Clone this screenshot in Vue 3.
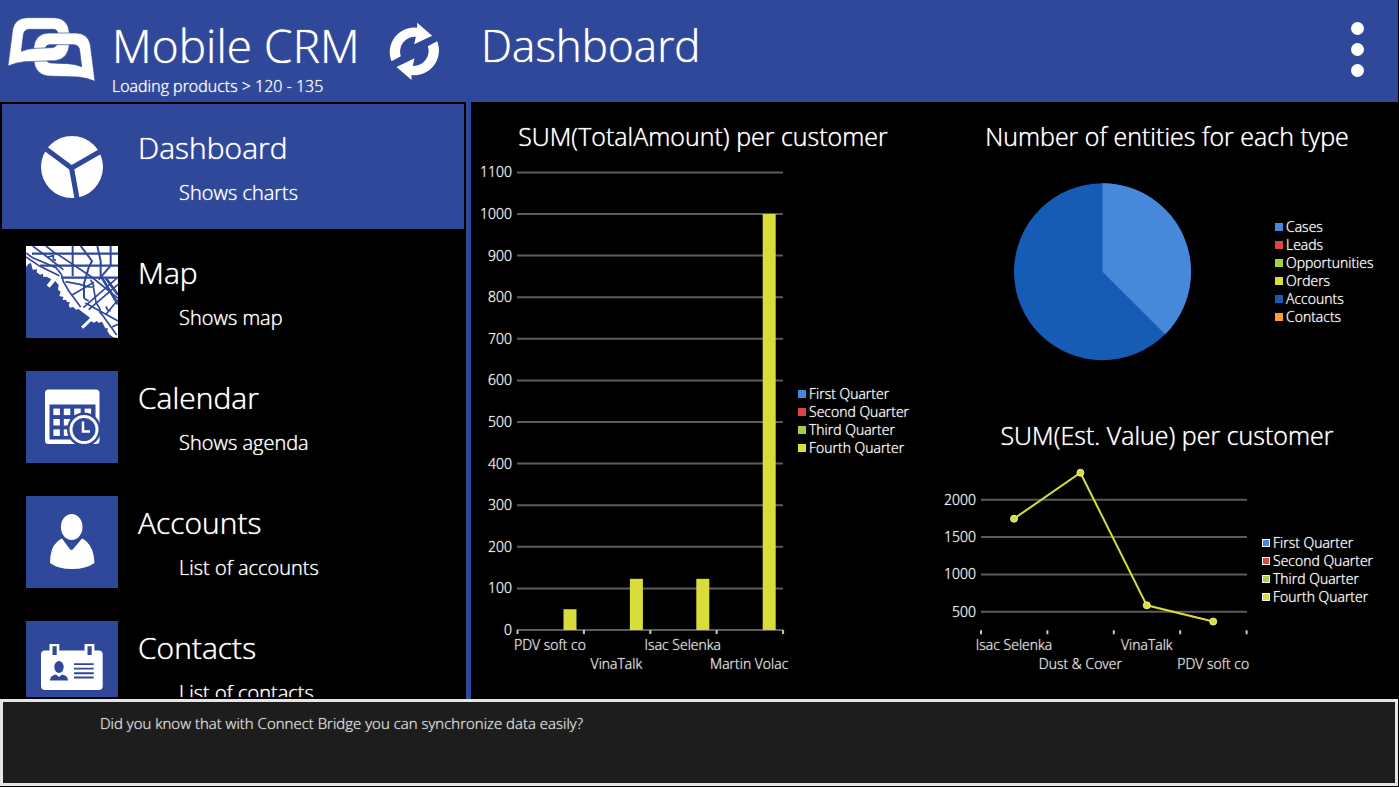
<script setup>
import { ref } from 'vue'

const selected = ref('dashboard')

const items = [
  { id: 'dashboard', title: 'Dashboard', note: 'Shows charts' },
  { id: 'map', title: 'Map', note: 'Shows map' },
  { id: 'calendar', title: 'Calendar', note: 'Shows agenda' },
  { id: 'accounts', title: 'Accounts', note: 'List of accounts' },
  { id: 'contacts', title: 'Contacts', note: 'List of contacts' },
]

const colors = {
  blue: '#4688da',
  red: '#dd4444',
  green: '#a4d048',
  yellow: '#d8dd3c',
  navy: '#175cb4',
  orange: '#ff9b33',
}

const quarters = [
  { label: 'First Quarter', color: colors.blue },
  { label: 'Second Quarter', color: colors.red },
  { label: 'Third Quarter', color: colors.green },
  { label: 'Fourth Quarter', color: colors.yellow },
]

const entities = [
  { label: 'Cases', color: colors.blue },
  { label: 'Leads', color: colors.red },
  { label: 'Opportunities', color: colors.green },
  { label: 'Orders', color: colors.yellow },
  { label: 'Accounts', color: colors.navy },
  { label: 'Contacts', color: colors.orange },
]

/* Bar chart geometry */
const step = 66.4
const barBase = 470
const barY = (v) => barBase - (v * 41.6) / 100
const barTicks = Array.from({ length: 12 }, (_, i) => i * 100)
const bars = [
  { label: 'PDV soft co', value: 50 },
  { label: 'VinaTalk', value: 123 },
  { label: 'Isac Selenka', value: 123 },
  { label: 'Martin Volac', value: 1000 },
]

/* Line chart geometry */
const lineY = (v) => 190 - (v * 74.8) / 1000
const lineTicks = [500, 1000, 1500, 2000]
const points = [
  { label: 'Isac Selenka', value: 1745 },
  { label: 'Dust & Cover', value: 2360 },
  { label: 'VinaTalk', value: 587 },
  { label: 'PDV soft co', value: 370 },
]
const linePath = points.map((p, i) => `${79 + i * step},${lineY(p.value)}`).join(' ')
</script>

<template>
  <div class="app">
    <header class="top">
      <div class="brand">
        <svg class="logo" viewBox="0 0 288 222" aria-hidden="true">
          <defs>
            <path
              id="link-shape"
              fill-rule="evenodd"
              d="M12 162L26 52Q33 18 70 17H150Q192 18 196 62V98Q192 140 155 146L62 149Q34 152 12 162ZM52 118Q70 110 93 109L143 107Q160 106 161 88V64Q160 52 148 52H74Q59 54 58 70Z"
            />
            <clipPath id="front"><rect x="0" y="100" width="142" height="70" /></clipPath>
          </defs>
          <g class="link-fill">
            <use href="#link-shape" />
            <use href="#link-shape" transform="translate(285 46) scale(-1 1)" />
            <use href="#link-shape" clip-path="url(#front)" />
          </g>
        </svg>
        <div class="names">
          <h1>Mobile CRM</h1>
          <p>Loading products &gt; 120 - 135</p>
        </div>
        <button class="refresh" type="button" aria-label="Refresh">
          <svg viewBox="1165 62 158 180" aria-hidden="true">
            <g id="arrow">
              <path d="M1175 183A74 74 0 0 1 1252 82V67L1297 106L1243 132L1248 109A45 45 0 0 0 1203 168Z" />
            </g>
            <use href="#arrow" transform="rotate(180 1243.5 153)" />
          </svg>
        </button>
      </div>
      <h2>Dashboard</h2>
      <button class="more" type="button" aria-label="More options">
        <span></span><span></span><span></span>
      </button>
    </header>

    <div class="body">
      <nav class="side" aria-label="Modules">
        <div class="list">
          <button
            v-for="it in items"
            :key="it.id"
            type="button"
            class="item"
            :class="{ active: it.id === selected }"
            @click="selected = it.id"
          >
            <svg v-if="it.id === 'dashboard'" class="icon" viewBox="0 0 92 92" aria-hidden="true">
              <circle cx="46" cy="46" r="31" fill="#fff" />
              <path d="M20 28L45.500 47L76 29.500M45.500 47L51.500 80" fill="none" stroke="#2f4899" stroke-width="5" />
            </svg>
            <svg v-else-if="it.id === 'map'" class="icon" viewBox="18 15 276 276" aria-hidden="true">
              <path
                fill="#fff"
                d="M18 15H294V291L280 289L270 282L262 270L264 262L256 262L246 242L236 246L231 240L222 245L213 241L190 263L183 257L204 237L210 230L184 211L176 204L168 206L160 198L150 200L146 193L150 182L142 184L138 176L128 177L130 168L118 165L122 152L114 146L116 132L106 120L89 140L80 133L94 115L80 107L70 108L69 98L60 101L50 94L51 85L38 86L33 66L26 68L18 78Z"
              />
              <g fill="none" stroke="#2f4899" stroke-width="5">
                <path d="M18 36L38 50L108 80L124 100M38 15L78 45L130 86M78 15L110 40M110 38L215 108L294 172M18 48L60 76L118 104" />
                <path d="M36 38H294M60 74H294M124 110H294" stroke-width="7" />
                <path d="M158 15V106M232 15L242 60V106M182 15L216 60L206 80L192 128V172M272 15V74M272 74L236 116" stroke-width="6" />
                <path d="M124 100L130 122L148 152L182 198M136 122L180 130L206 138H222M156 162L222 124M222 136L212 116M220 136L228 184L240 204V214L250 226L290 282M196 186L294 240M192 172L206 180" />
                <path d="M242 104L294 190M258 112L294 162" stroke-width="8" />
                <path d="M190 200L290 112M206 206L294 130M258 220L294 176M258 196L262 206L272 210M276 258L294 250" />
                <path d="M84 48L100 44V56L108 58" />
              </g>
            </svg>
            <svg v-else-if="it.id === 'calendar'" class="icon" viewBox="0 0 92 92" aria-hidden="true">
              <rect x="19" y="18.500" width="54.500" height="54.500" rx="3.500" fill="#fff" />
              <rect x="23.500" y="33.500" width="46" height="35" fill="#2f4899" />
              <g fill="#fff">
                <template v-for="r in 3" :key="r">
                  <rect v-for="c in 4" :key="c" :x="17 + c * 10.4" :y="27.200 + r * 10.4" width="6.500" height="6.500" />
                </template>
              </g>
              <circle cx="58" cy="58.500" r="17" fill="#2f4899" />
              <circle cx="58" cy="58.500" r="13" fill="none" stroke="#fff" stroke-width="3" />
              <path d="M57 50.500V60.500H64" fill="none" stroke="#fff" stroke-width="2.500" />
            </svg>
            <svg v-else-if="it.id === 'accounts'" class="icon" viewBox="0 0 92 92" aria-hidden="true">
              <g fill="#fff">
                <ellipse cx="45.700" cy="31" rx="10.800" ry="13" />
                <path d="M24 67Q24 52 31 46Q33 43.500 36 42.500L43 52Q45.500 56 48 52L56 42.500Q59 43.500 61 46Q68 53 68.500 67Q60 73 46 73Q32 73 24 67Z" />
              </g>
            </svg>
            <svg v-else class="icon" viewBox="0 0 92 92" aria-hidden="true">
              <rect x="15" y="29.500" width="61.700" height="39.500" rx="4" fill="#fff" />
              <path d="M23.500 23H33.300V33H23.500ZM58.600 23H68.400V33H58.600Z" fill="#fff" />
              <g fill="#2f4899">
                <path d="M26.500 25.300H30.700V34H26.500ZM61.500 25.300H65.700V34H61.500Z" />
                <ellipse cx="33" cy="46" rx="4.700" ry="6" />
                <path d="M24 59.500Q24 54.500 30 53.500L33 56L36 53.500Q42 54.500 42 59.500Z" />
                <path d="M48 42.300H67.700V44H48ZM48 46.800H67.700V48.500H48ZM48 51.200H67.700V53.200H48ZM48 55.500H67.700V57.500H48Z" />
              </g>
            </svg>
            <span class="text">
              <strong>{{ it.title }}</strong>
              <small>{{ it.note }}</small>
            </span>
          </button>
        </div>
      </nav>

      <main class="charts">
        <section class="panel tall">
          <h3>SUM(TotalAmount) per customer</h3>
          <div class="plot">
            <svg viewBox="0 0 327 539" role="img" aria-label="Total amount per customer">
              <g v-for="t in barTicks" :key="t">
                <line class="grid" x1="46" x2="312" :y1="barY(t)" :y2="barY(t)" />
                <text class="axis" x="41" :y="barY(t) + 5" text-anchor="end">{{ t }}</text>
              </g>
              <line v-for="n in 5" :key="n" class="tick" :x1="46.500 + (n - 1) * step" :x2="46.500 + (n - 1) * step" y1="470" y2="474" />
              <g v-for="(b, i) in bars" :key="b.label">
                <rect :x="92.500 + i * step" :y="barY(b.value)" width="13" :height="barBase - barY(b.value)" :fill="colors.yellow" />
                <text class="cat" :x="79 + i * step" :y="i % 2 ? 509 : 490" text-anchor="middle">{{ b.label }}</text>
              </g>
            </svg>
            <ul class="legend">
              <li v-for="q in quarters" :key="q.label"><i :style="{ background: q.color }"></i>{{ q.label }}</li>
            </ul>
          </div>
        </section>

        <section class="panel">
          <h3>Number of entities for each type</h3>
          <div class="plot pie">
            <svg viewBox="0 0 340 240" role="img" aria-label="Entities by type">
              <circle cx="167.500" cy="111.500" r="88.500" :fill="colors.navy" />
              <path d="M167.500 111.500V23A88.500 88.500 0 0 1 230.080 174.080Z" :fill="colors.blue" />
            </svg>
            <ul class="legend">
              <li v-for="e in entities" :key="e.label"><i :style="{ background: e.color }"></i>{{ e.label }}</li>
            </ul>
          </div>
        </section>

        <section class="panel">
          <h3>SUM(Est. Value) per customer</h3>
          <div class="plot outlined">
            <svg viewBox="0 0 327 240" role="img" aria-label="Estimated value per customer">
              <g v-for="t in lineTicks" :key="t">
                <line class="grid" x1="46" x2="312" :y1="lineY(t)" :y2="lineY(t)" />
                <text class="axis" x="41" :y="lineY(t) + 5" text-anchor="end">{{ t }}</text>
              </g>
              <line v-for="n in 5" :key="n" class="tick" :x1="46 + (n - 1) * step" :x2="46 + (n - 1) * step" y1="171" y2="175" />
              <polyline :points="linePath" fill="none" :stroke="colors.yellow" stroke-width="2" />
              <g v-for="(p, i) in points" :key="p.label">
                <circle :cx="79 + i * step" :cy="lineY(p.value)" r="3.500" :fill="colors.yellow" stroke="#eceea0" stroke-width="1" />
                <text class="cat" :x="79 + i * step" :y="i % 2 ? 210 : 191" text-anchor="middle">{{ p.label }}</text>
              </g>
            </svg>
            <ul class="legend">
              <li v-for="q in quarters" :key="q.label"><i :style="{ background: q.color }"></i>{{ q.label }}</li>
            </ul>
          </div>
        </section>
      </main>
    </div>

    <footer class="tip">Did you know that with Connect Bridge you can synchronize data easily?</footer>
  </div>
</template>

<style>
html,
body {
  background: #000;
}
</style>

<style scoped>
.app {
  --blue: #2f4899;
  --side: clamp(320px, 34vw, 471px);
  display: grid;
  grid-template-rows: auto minmax(0, 1fr) auto;
  height: 100vh;
  background: #000;
  color: #fff;
  font-family: "Open Sans", "Noto Sans", sans-serif;
  font-weight: 300;
  text-shadow: 0 0 1px currentColor;
}
h1, h2, h3, p, ul { margin: 0; font-weight: inherit; }
button {
  padding: 0;
  border: 0;
  background: none;
  color: inherit;
  font: inherit;
  text-shadow: inherit;
  cursor: pointer;
}
.top {
  display: grid;
  grid-template-columns: var(--side) 1fr auto;
  min-height: 102px;
  margin-right: 1px;
  background: var(--blue);
}
.brand { display: flex; align-items: flex-start; padding-left: 4px; }
.logo { width: 96px; height: 74px; margin-top: 12px; }
.link-fill { fill: #fff; stroke: #2f4899; stroke-width: 2; }
.names { flex: none; width: 250px; padding: 14px 0 0 12px; white-space: nowrap; }
h1 { font-size: 46px; line-height: 62px; }
.names p { font-size: 16px; line-height: 20px; }
h2 { padding: 14px 0 0 10px; font-size: 44px; line-height: 62px; }
.refresh { margin: 21px 0 0 26px; }
.refresh svg { display: block; width: 53px; height: 60px; fill: #fff; }
.more {
  display: flex;
  flex-direction: column;
  gap: 8px;
  align-self: start;
  padding: 22px 34px 10px 10px;
}
.more span { width: 13px; height: 13px; border-radius: 50%; background: #fff; }
.body { display: grid; grid-template-columns: var(--side) minmax(0, 1fr); min-height: 0; }
.side { border-right: 5px solid var(--blue); padding: 2px; display: flex; min-height: 0; overflow: hidden; }
.list { flex: 1; overflow: hidden; }
.item {
  display: flex;
  align-items: center;
  width: 100%;
  height: 125px;
  padding-left: 24px;
  text-align: left;
}
.active { background: var(--blue); }
.icon { flex: none; width: 92px; height: 92px; background: var(--blue); }
.text { display: flex; flex-direction: column; gap: 12px; padding: 2px 0 0 20px; }
.text strong { font-size: 30px; font-weight: inherit; line-height: 38px; }
.text small { padding-left: 41px; font-size: 20px; line-height: 28px; }
.charts {
  display: grid;
  grid-template-columns: 1fr 1fr;
  grid-template-rows: 1fr 1fr;
  min-height: 0;
}
.panel { display: flex; flex-direction: column; min-width: 0; min-height: 0; }
.tall { grid-row: span 2; }
h3 { padding: 17px 0 6px; font-size: 25px; line-height: 35px; text-align: center; }
.plot {
  flex: 1;
  display: grid;
  grid-template-columns: minmax(0, 1fr) 137px;
  grid-template-rows: minmax(0, 1fr);
  min-height: 0;
}
.pie { grid-template-columns: minmax(0, 1fr) 124px; }
.plot svg { width: 100%; height: 100%; }
.grid { stroke: #5c5c5c; stroke-width: 2; }
.tick { stroke: #c8c8c8; stroke-width: 2; }
.axis { fill: #f4f4f4; font-size: 14px; }
.cat { fill: #dcdcdc; font-size: 14px; }
.legend {
  align-self: center;
  padding: 0 0 17px;
  list-style: none;
  font-size: 14px;
  line-height: 18px;
}
.legend li { display: flex; align-items: center; gap: 3px; white-space: nowrap; }
.legend i { box-sizing: border-box; flex: none; width: 8px; height: 8px; }
.outlined i { border: 1px solid #f4f4f4; }
.tip {
  box-sizing: border-box;
  min-height: 87px;
  margin: 0 1px 1px 0;
  padding: 10px 97px;
  border: 3px solid #e6e4e4;
  background: #1d1d1d;
  color: #dcdcdc;
  font-size: 15px;
  line-height: 22px;
}
</style>
